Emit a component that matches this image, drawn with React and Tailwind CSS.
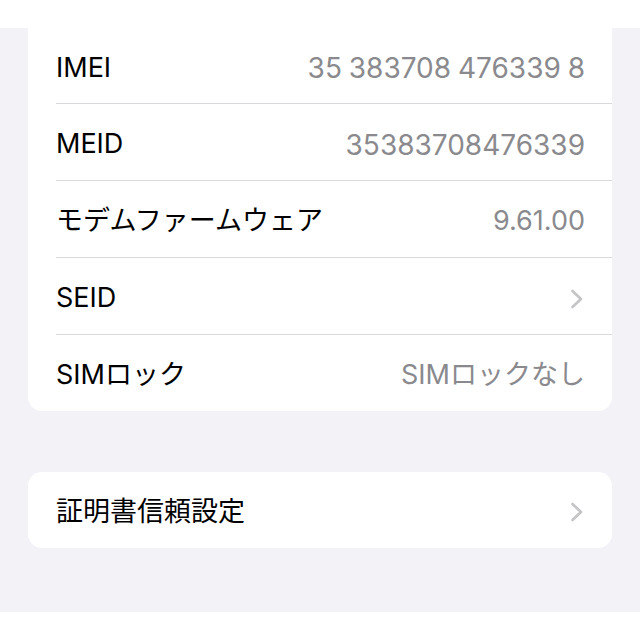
import React from "react";

const font = {
  fontFamily: '"Inter", "Noto Sans CJK JP", sans-serif',
};

const rows = [
  { label: "IMEI", value: "35 383708 476339 8", digits: true },
  { label: "MEID", value: "35383708476339", digits: true },
  { label: "モデムファームウェア", value: "9.61.00" },
  { label: "SEID", chevron: true },
  { label: "SIMロック", value: "SIMロックなし" },
];

const Chevron = () => (
  <svg width="14" height="20" viewBox="0 0 14 20" className="shrink-0 mr-[1px]">
    <polyline
      points="2.5,2 11,10 2.5,18"
      fill="none"
      stroke="#c4c4c7"
      strokeWidth="2.6"
      strokeLinecap="round"
      strokeLinejoin="round"
    />
  </svg>
);

const Row = ({ label, value, chevron, digits, first }) => (
  <div className="pl-[28px]">
    <div
      className={`flex items-center justify-between pr-[27px] pt-[5px] ${
        first ? "h-[75px]" : "h-[77px] border-t border-[#d9d9dd]"
      }`}
    >
      <span className="text-[27px] text-black">{label}</span>
      {chevron ? (
        <Chevron />
      ) : digits ? (
        <span className="text-[28px] text-[#8a8a8e] [word-spacing:-1px]">
          {value}
        </span>
      ) : (
        <span className="text-[27px] text-[#8a8a8e]">{value}</span>
      )}
    </div>
  </div>
);

export default function App() {
  return (
    <div className="w-[640px] h-[640px] bg-[#f2f2f7] flex flex-col overflow-hidden" style={font}>
      {/* top bar */}
      <div className="h-[28px] bg-white shrink-0" />

      <div className="px-[28px]">
        {/* device info card */}
        <div className="bg-white rounded-b-[14px]">
          {rows.map((r, i) => (
            <Row key={r.label} {...r} first={i === 0} />
          ))}
        </div>

        {/* certificate trust card */}
        <div className="bg-white rounded-[14px] mt-[61px] h-[76px] flex items-center justify-between pl-[28px] pr-[27px] pt-[4px]">
          <span className="text-[27px] text-black">証明書信頼設定</span>
          <Chevron />
        </div>
      </div>

      <div className="flex-1" />
      <div className="h-[28px] bg-white shrink-0" />
    </div>
  );
}
